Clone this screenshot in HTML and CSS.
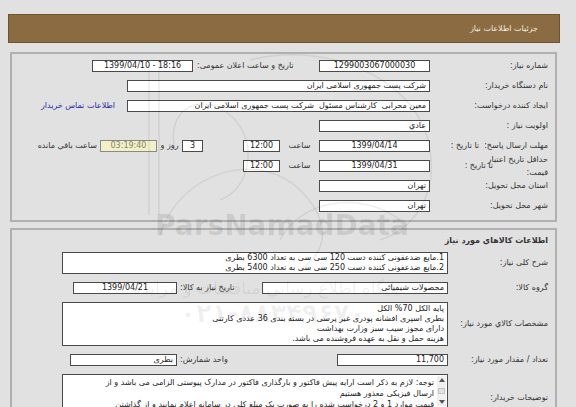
FILE: index.html
```html
<!DOCTYPE html>
<html lang="fa" dir="rtl">
<head>
<meta charset="utf-8">
<title>جزئیات اطلاعات نیاز</title>
<link rel="stylesheet" href="styles.css">
</head>
<body>
<div class="header">جزئیات اطلاعات نیاز</div>

<section class="panel p1">
  <div class="row">
    <div class="lbl">شماره نیاز:</div>
    <div class="box w111 c">1299003067000030</div>
    <div class="pub">تاریخ و ساعت اعلان عمومی:</div>
    <div class="box w101 c ltr">1399/04/10 - 18:16</div>
  </div>
  <div class="row">
    <div class="lbl">نام دستگاه خریدار:</div>
    <div class="box w303">شرکت پست جمهوری اسلامی ایران</div>
  </div>
  <div class="row">
    <div class="lbl">ایجاد کننده درخواست:</div>
    <div class="box w303">معین محرابی&nbsp; کارشناس مسئول&nbsp; شرکت پست جمهوری اسلامی ایران</div>
    <a class="link" href="#">اطلاعات تماس خریدار</a>
  </div>
  <div class="row">
    <div class="lbl">اولویت نیاز :</div>
    <div class="box w111">عادي</div>
  </div>
  <div class="row">
    <div class="lbl">مهلت ارسال پاسخ:&nbsp; تا تاریخ :</div>
    <div class="box w111 c">1399/04/14</div>
    <div class="unit">ساعت</div>
    <div class="box w37 c">12:00</div>
    <div class="box w21 c days">3</div>
    <div class="unit w25">روز و</div>
    <div class="box w57 c remain">03:19:40</div>
    <div class="note">ساعت باقي مانده</div>
  </div>
  <div class="row">
    <div class="lbl split"><span class="two">حداقل تاریخ اعتبار<br>قیمت:</span><span>تا تاریخ :</span></div>
    <div class="box w111 c">1399/04/31</div>
    <div class="unit">ساعت</div>
    <div class="box w37 c">12:00</div>
  </div>
  <div class="row">
    <div class="lbl">استان محل تحویل:</div>
    <div class="box w111">تهران</div>
  </div>
  <div class="row">
    <div class="lbl">شهر محل تحویل:</div>
    <div class="box w111">تهران</div>
  </div>
</section>

<section class="panel p2">
  <div class="title">اطلاعات کالاهاي مورد نیاز</div>
  <div class="row tall">
    <div class="lbl">شرح کلی نیاز:</div>
    <div class="area h22">1.مایع ضدعفونی کننده دست 120 سی سی به تعداد 6300 بطری<br>2.مایع ضدعفونی کننده دست 250 سی سی به تعداد 5400 بطری</div>
  </div>
  <div class="row">
    <div class="lbl">گروه کالا:</div>
    <div class="box w186">محصولات شیمیائی</div>
    <div class="cell w85">تاریخ نیاز به کالا:</div>
    <div class="box w104 c">1399/04/21</div>
  </div>
  <div class="row tall">
    <div class="lbl">مشخصات کالاي مورد نیاز:</div>
    <div class="area h44">پایه الکل 70% الکل<br>بطری اسپری افشانه پودری غیر پرسی در بسته بندی 36 عددی کارتنی<br>دارای مجوز سیب سبز وزارت بهداشت<br>هزینه حمل و نقل به عهده فروشنده می باشد.</div>
  </div>
  <div class="row">
    <div class="lbl">تعداد / مقدار مورد نیاز:</div>
    <div class="box w111">11,700</div>
    <div class="cell w160">واحد شمارش:</div>
    <div class="box w107">بطری</div>
  </div>
  <div class="row tall top">
    <div class="lbl desc">توضیحات خریدار:</div>
    <div class="area scrollbox">
      <div class="sbar"><span class="up"></span><span class="thumb"></span><span class="down"></span></div>
      <div class="stext">توجه: لازم به ذکر است ارایه پیش فاکتور و بارگذاری فاکتور در مدارک پیوستی الزامی می باشد و از<br>ارسال فیزیکی معذور هستیم<br>قیمت موارد 1 و 2 درخواست شده را به صورت یک مبلغ کلی در سامانه اعلام نمایید و از گذاشتن</div>
    </div>
  </div>
</section>

<div class="wm" aria-hidden="true">
  <svg class="wm-logo" width="576" height="407" viewBox="0 0 576 407">
    <g fill="none" stroke="rgba(0,0,0,0.07)" stroke-width="1.5">
      <line x1="149" y1="60" x2="149" y2="215"/>
      <line x1="159" y1="60" x2="159" y2="215"/>
      <path d="M160 235 C 180 170, 260 150, 300 190 C 330 220, 330 250, 300 270"/>
      <path d="M175 150 C 165 110, 200 90, 230 115 C 260 140, 250 190, 220 200"/>
      <path d="M250 60 C 330 40, 420 80, 430 150 C 438 200, 410 230, 380 240"/>
      <path d="M280 240 C 300 200, 360 190, 400 220"/>
    </g>
  </svg>
  <div class="wm-brand">ParsNamadData</div>
  <div class="wm-fa">پایگاه اطلاع رسانی مناقصات و مزایده</div>
  <div class="wm-tel">۰۲۱-۸۸۳۴۹۶۷۰</div>
</div>
</body>
</html>
```

FILE: styles.css
```css
* { box-sizing: border-box; }
html, body { margin: 0; padding: 0; }
body {
  width: 576px;
  height: 407px;
  overflow: hidden;
  position: relative;
  background: #e1e1e1;
  font-family: "DejaVu Sans", "Noto Sans", sans-serif;
  font-size: 8px;
  color: #333;
  direction: rtl;
}

.header {
  margin: 14px 16px 0 8px;
  width: 552px;
  height: 29px;
  background: #8b6c42;
  border: 1px solid #6d532f;
  color: #f3ecdd;
  display: flex;
  align-items: center;
  padding-right: 21px;
}

.panel {
  margin: 9px 19px 0 10px;
  width: 547px;
  border: 2px solid #b0b0b0;
  padding: 6px 7px 0 0;
}
.p1 { height: 170px; }
.p2 { margin-top: 6px; height: 185px; padding-top: 5px; }

.row {
  display: flex;
  align-items: center;
  height: 12px;
  line-height: 12px;
  white-space: nowrap;
}
.row + .row { margin-top: 8px; }
.row.tall { height: auto; }
.row.top { align-items: flex-start; }

.lbl { width: 118px; flex: none; }
.p2 .lbl { width: 100px; }
.lbl.desc { padding-top: 18px; }

.split { display: flex; align-items: center; }
.split .two { width: 55px; line-height: 13px; margin: -7px 0; }

.box {
  flex: none;
  height: 12px;
  line-height: 10px;
  background: #fff;
  border: 1px solid #4a4a4a;
  padding: 0 3px;
  overflow: hidden;
  color: #222;
}
.c { text-align: center; }
.ltr { direction: ltr; }

.w21 { width: 21px; }
.w37 { width: 37px; }
.w57 { width: 57px; }
.w101 { width: 101px; }
.w104 { width: 104px; }
.w107 { width: 107px; }
.w111 { width: 111px; }
.w186 { width: 186px; }
.w303 { width: 303px; }

.pub { width: 126px; flex: none; text-align: left; padding-left: 4px; }
.cell { flex: none; text-align: left; padding-left: 3px; }
.w85 { width: 85px; }
.w160 { width: 160px; }

.unit { width: 39px; flex: none; text-align: center; }
.unit.w25 { width: 25px; }
.days { margin-right: 40px; }
.remain { background: #f1f0c9; border-color: #8a8a8a; color: #8a8760; }
.note { margin-right: 3px; }

.link { margin-right: 12px; color: #2626a6; text-decoration: none; }

.title { height: 12px; line-height: 12px; margin-bottom: 5px; font-weight: bold; color: #333; }

.area {
  flex: none;
  width: 386px;
  background: #fff;
  border: 1px solid #4a4a4a;
  padding: 0 3px;
  line-height: 10px;
  color: #222;
  white-space: nowrap;
  overflow: hidden;
}
.h22 { height: 22px; }
.h44 { height: 44px; padding-top: 1px; }

.scrollbox { display: flex; height: 40px; padding: 0; }
.sbar {
  flex: none;
  width: 9px;
  height: 30px;
  margin: 1px 1px 0 0;
  background: #f0f0f0;
  display: flex;
  flex-direction: column;
  align-items: center;
  justify-content: space-between;
  padding: 2px 0;
}
.sbar .up, .sbar .down { width: 0; height: 0; border-left: 3px solid transparent; border-right: 3px solid transparent; }
.sbar .up { border-bottom: 4px solid #555; }
.sbar .down { border-top: 4px solid #555; }
.sbar .thumb { width: 7px; height: 6px; background: #e2e2e2; border: 1px solid #c4c4c4; }
.stext { flex: 1; padding: 2px 3px 0 3px; line-height: 11px; overflow: hidden; }

.wm { position: absolute; left: 0; top: 0; width: 576px; height: 407px; pointer-events: none; }
.wm-logo { position: absolute; left: 0; top: 0; }
.wm-brand {
  position: absolute;
  left: 155px;
  top: 209px;
  direction: ltr;
  font-family: "DejaVu Sans", sans-serif;
  font-weight: bold;
  font-size: 28px;
  color: rgba(0, 0, 0, 0.1);
}
.wm-fa {
  position: absolute;
  left: 160px;
  top: 278px;
  width: 240px;
  text-align: center;
  font-size: 17px;
  color: rgba(0, 0, 0, 0.07);
  white-space: nowrap;
}
.wm-tel {
  position: absolute;
  left: 180px;
  top: 298px;
  direction: ltr;
  font-size: 26px;
  font-weight: bold;
  color: rgba(0, 0, 0, 0.06);
}
```
